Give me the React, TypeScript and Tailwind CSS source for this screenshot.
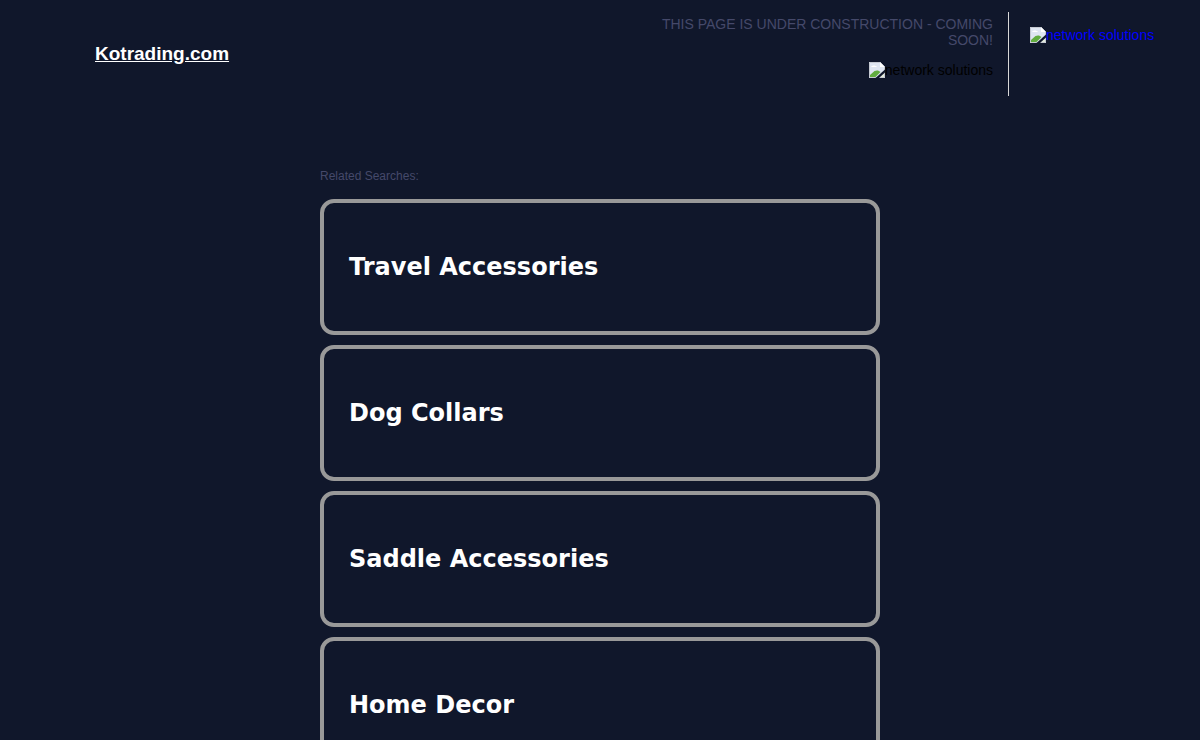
const sans = "font-['Liberation_Sans',Arial,sans-serif]";

function BrokenImage() {
  return (
    <svg width="16" height="16" viewBox="0 0 16 16" className="absolute left-0 top-0" aria-hidden="true">
      <path d="M0 0H11L16 5V16H0Z" fill="#dfe6f2" />
      <path d="M0.5 0.5H10.8L15.5 5.2V15.5H0.5Z" fill="none" stroke="#c5c9d2" />
      <path d="M11 0V5H16Z" fill="#ffffff" />
      <path d="M2 5C3 3 6.5 3 8 5Z" fill="#ffffff" />
      <path d="M1 15V13L5.5 9C8 8 10 8.5 11.5 10L6.5 15Z" fill="#62ad3f" />
      <path d="M11 15L15 11V15Z" fill="#e4ecdc" />
      <path d="M6.5 16L16 7.5V10.5L10 16Z" fill="#10172b" />
    </svg>
  );
}

function AltImage({ className }: { className: string }) {
  return (
    <span className={`relative inline-block h-4 leading-4 text-sm whitespace-nowrap ${className}`}>
      <BrokenImage />
      <span className="pl-4">network solutions</span>
    </span>
  );
}

const searches = ["Travel Accessories", "Dog Collars", "Saddle Accessories", "Home Decor"];

export default function App() {
  return (
    <div className={`h-[740px] overflow-hidden bg-[#10172b] ${sans}`}>
      <header className="flex h-[108px] pt-3">
        <div className="w-[95px] shrink-0" />
        <div className="flex-1 pt-[29px]">
          <a className="text-[19px] leading-[25px] font-bold text-white underline" href="#">Kotrading.com</a>
        </div>
        <div className="flex h-[84px] w-[360px] flex-col items-end border-r border-[#d8d8d8] pr-[15px] pt-1 text-right">
          <p className="text-sm leading-4 text-[#45496a]">THIS PAGE IS UNDER CONSTRUCTION - COMING SOON!</p>
          <AltImage className="mt-[14px] text-black" />
        </div>
        <div className="w-[191px] pl-[21px] pt-[15px]">
          <a href="#" className="flex">
            <AltImage className="text-[#0000ff]" />
          </a>
        </div>
      </header>
      <main className="mx-auto mt-[61px] w-[560px]">
        <p className="mb-[15px] text-xs leading-[15px] text-[#45496a]">Related Searches:</p>
        <div className="flex flex-col gap-[10px]">
          {searches.map((s) => (
            <a
              key={s}
              href="#"
              className="flex h-[136px] shrink-0 items-center rounded-[14px] border-4 border-[#999999] pl-[25px] font-['DejaVu_Sans',Verdana,sans-serif] text-2xl font-bold text-white"
            >
              {s}
            </a>
          ))}
        </div>
      </main>
    </div>
  );
}
